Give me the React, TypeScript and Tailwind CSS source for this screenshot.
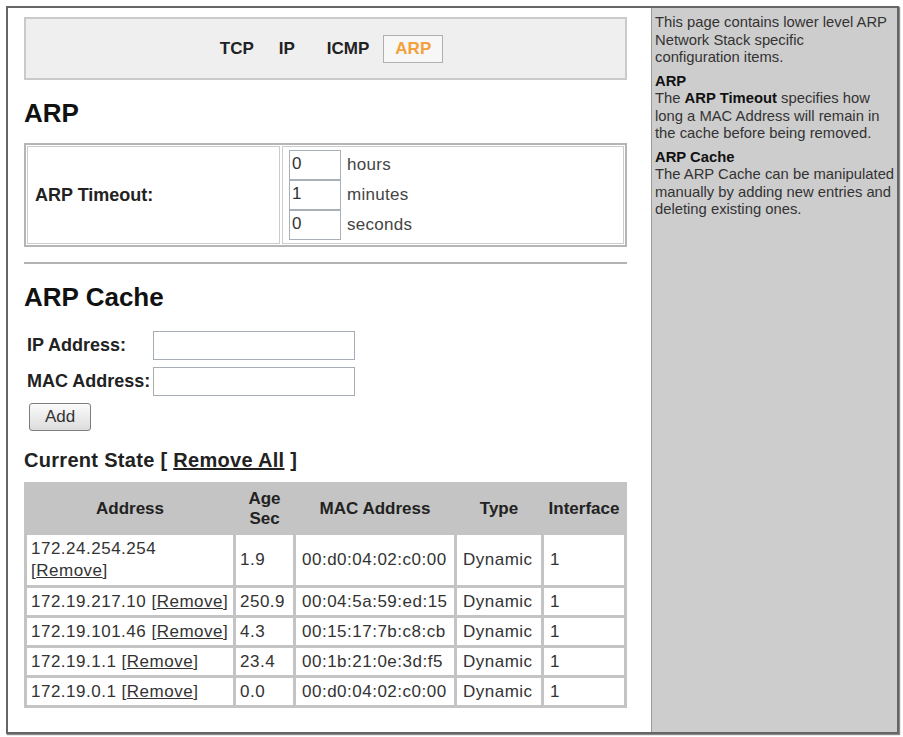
import React from "react";

type Entry = { ip: string; age: string; mac: string; type: string; iface: string; wrap?: boolean };

const entries: Entry[] = [
  { ip: "172.24.254.254", age: "1.9", mac: "00:d0:04:02:c0:00", type: "Dynamic", iface: "1", wrap: true },
  { ip: "172.19.217.10", age: "250.9", mac: "00:04:5a:59:ed:15", type: "Dynamic", iface: "1" },
  { ip: "172.19.101.46", age: "4.3", mac: "00:15:17:7b:c8:cb", type: "Dynamic", iface: "1" },
  { ip: "172.19.1.1", age: "23.4", mac: "00:1b:21:0e:3d:f5", type: "Dynamic", iface: "1" },
  { ip: "172.19.0.1", age: "0.0", mac: "00:d0:04:02:c0:00", type: "Dynamic", iface: "1" },
];

function TimeField({ value, unit }: { value: string; unit: string }) {
  return (
    <div className="flex items-center h-[30px]">
      <div className="w-[52px] h-[30px] border border-[#a9afb6] bg-white pl-[2px] text-[17px] leading-[26px] text-[#333]">
        {value}
      </div>
      <span className="ml-[6px] text-[17px] tracking-[0.3px] text-[#444]">{unit}</span>
    </div>
  );
}

export default function App() {
  return (
    <div className="bg-white w-[903px] h-[737px] p-[6px] font-['Liberation_Sans',Arial,sans-serif]">
      <div className="flex w-[893px] h-[728px] border-2 border-[#666] shadow-[1px_1px_1px_#888]">
        {/* main column */}
        <div className="w-[643px] bg-white pl-[16px] pt-[9px]">
          <div className="w-[603px]">
            {/* protocol tabs */}
            <div className="h-[63px] bg-[#efefef] border-2 border-[#cacaca] flex items-center justify-center pl-[12px]">
              <span className="text-[17px] font-bold text-[#222]">TCP</span>
              <span className="ml-[25px] text-[17px] font-bold text-[#222]">IP</span>
              <span className="ml-[32px] text-[17px] font-bold text-[#222]">ICMP</span>
              <span className="ml-[14px] h-[28px] px-[11px] flex items-center border border-[#b0b0b0] bg-[#f7f7f7] text-[17px] font-bold text-[#f2a13c]">
                ARP
              </span>
            </div>

            <h1 className="mt-[18px] text-[26px] leading-[30px] font-bold text-[#111]">ARP</h1>

            {/* ARP timeout */}
            <div className="mt-[15px] h-[104px] border-2 border-[#b5b5b5] p-[1px] flex gap-[2px]">
              <div className="w-[253px] border border-[#cccccc] flex items-center pl-[7px]">
                <span className="text-[18px] font-bold text-[#222]">ARP Timeout:</span>
              </div>
              <div className="flex-1 border border-[#cccccc] pl-[6px] pt-[3px]">
                <TimeField value="0" unit="hours" />
                <TimeField value="1" unit="minutes" />
                <TimeField value="0" unit="seconds" />
              </div>
            </div>

            <div className="mt-[15px] h-[2px] bg-[#b3b3b3]" />

            <h2 className="mt-[18px] text-[26px] leading-[30px] font-bold text-[#111]">ARP Cache</h2>

            {/* new entry form */}
            <div className="mt-[19px] pl-[3px] flex flex-col gap-[7px]">
              <div className="flex items-center">
                <span className="w-[126px] text-[18px] font-bold text-[#222]">IP Address:</span>
                <div className="w-[202px] h-[29px] border border-[#a6adb5] bg-white" />
              </div>
              <div className="flex items-center">
                <span className="w-[126px] text-[18px] font-bold text-[#222]">MAC Address:</span>
                <div className="w-[202px] h-[29px] border border-[#a6adb5] bg-white" />
              </div>
              <div className="ml-[2px]">
                <button className="w-[62px] h-[28px] border border-[#7d7d7d] rounded-[3px] bg-gradient-to-b from-[#fbfbfb] to-[#dcdcdc] text-[17px] text-[#333]">
                  Add
                </button>
              </div>
            </div>

            <div className="mt-[17px] text-[20px] leading-[24px] tracking-[0.3px] font-bold text-[#222]">
              Current State [ <span className="underline">Remove All</span> ]
            </div>

            {/* ARP cache entries */}
            <table className="mt-[10px] w-[603px] table-fixed border-separate border-spacing-[3px] bg-[#c4c4c4] text-[17px] tracking-[0.5px] text-[#333]">
              <colgroup>
                <col className="w-[206px]" />
                <col className="w-[57px]" />
                <col className="w-[158px]" />
                <col className="w-[84px]" />
                <col className="w-[80px]" />
              </colgroup>
              <thead>
                <tr className="h-[47px]">
                  <th className="font-bold text-[#222] leading-[20px] tracking-normal">Address</th>
                  <th className="font-bold text-[#222] leading-[20px] tracking-normal">
                    Age
                    <br />
                    Sec
                  </th>
                  <th className="font-bold text-[#222] leading-[20px] tracking-normal">MAC Address</th>
                  <th className="font-bold text-[#222] leading-[20px] tracking-normal">Type</th>
                  <th className="font-bold text-[#222] leading-[20px] tracking-normal">Interface</th>
                </tr>
              </thead>
              <tbody>
                {entries.map((e) => (
                  <tr key={e.ip} className={e.wrap ? "h-[50px]" : "h-[27px]"}>
                    <td className="bg-white px-[4px] py-0 leading-[22px]">
                      {e.ip}
                      {e.wrap ? <br /> : " "}
                      [<span className="underline">Remove</span>]
                    </td>
                    <td className="bg-white px-[4px] py-0 leading-[22px]">{e.age}</td>
                    <td className="bg-white px-[6px] py-0 leading-[22px]">{e.mac}</td>
                    <td className="bg-white px-[6px] py-0 leading-[22px]">{e.type}</td>
                    <td className="bg-white px-[6px] py-0 leading-[22px]">{e.iface}</td>
                  </tr>
                ))}
              </tbody>
            </table>
          </div>
        </div>

        {/* help sidebar */}
        <div className="flex-1 bg-[#cdcdcd] border-l border-[#999] pl-[3px] pt-[6px] text-[14.8px] leading-[17.5px] text-[#333]">
          <p>
            This page contains lower level ARP Network Stack specific
            <br />
            configuration items.
          </p>
          <p className="mt-[6px] font-bold text-[#111]">ARP</p>
          <p>
            The <b className="text-[#111]">ARP Timeout</b> specifies how long a MAC Address will remain in the cache
            before being removed.
          </p>
          <p className="mt-[6px] font-bold text-[#111]">ARP Cache</p>
          <p>The ARP Cache can be manipulated manually by adding new entries and deleting existing ones.</p>
        </div>
      </div>
    </div>
  );
}
